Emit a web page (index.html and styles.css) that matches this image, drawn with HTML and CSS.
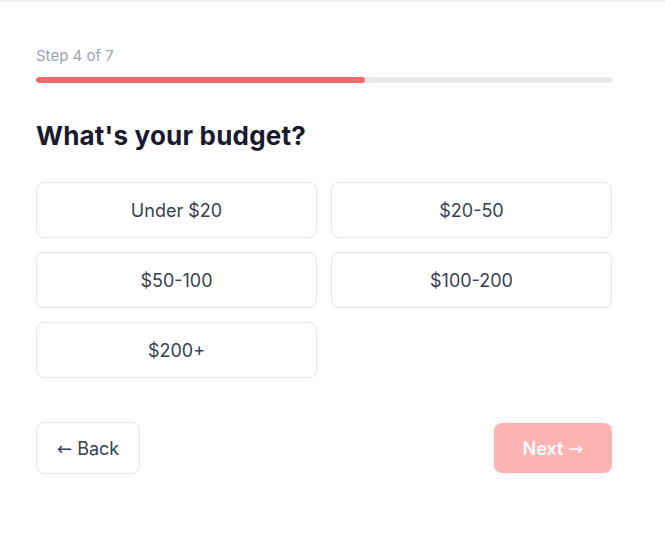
FILE: index.html
```html
<!DOCTYPE html>
<html>
<head>
<meta charset="utf-8">
<link rel="stylesheet" href="styles.css">
</head>
<body>
<div class="page">
  <div class="wizard">
    <div class="step">Step 4 of 7</div>
    <div class="track"><div class="fill" style="width:57.14%"></div></div>
    <h1 class="title">What's your budget?</h1>
    <div class="options">
      <button class="option">Under $20</button>
      <button class="option">$20-50</button>
      <button class="option">$50-100</button>
      <button class="option">$100-200</button>
      <button class="option">$200+</button>
    </div>
    <div class="nav">
      <button class="back"><span class="arrow">←</span> Back</button>
      <button class="next">Next <span class="arrow">→</span></button>
    </div>
  </div>
</div>
</body>
</html>
```

FILE: styles.css
```css
html, body {
  margin: 0;
  padding: 0;
  background: #ffffff;
}
body {
  font-family: Inter, "Noto Sans", "Liberation Sans", sans-serif;
  border-top: 2px solid #f4f4f4;
}
.page {
  padding: 44px 36px 0 36px;
}
.wizard {
  width: 576px;
}
.step {
  font-size: 15px;
  line-height: 20px;
  color: #9ca3af;
}
.track {
  margin-top: 11px;
  height: 6px;
  border-radius: 3px;
  background: #e9e9e9;
  overflow: hidden;
}
.fill {
  height: 100%;
  background: #ef6b6b;
  border-radius: 3px;
}
.title {
  margin: 36px 0 0 0;
  font-size: 26px;
  line-height: 34px;
  font-weight: 700;
  letter-spacing: 0.2px;
  color: #1a1a2e;
}
.options {
  margin-top: 29px;
  display: grid;
  grid-template-columns: 1fr 1fr;
  gap: 14px 14px;
}
.option {
  height: 56px;
  border: 1px solid #e5e7eb;
  border-radius: 8px;
  background: #fff;
  font-family: inherit;
  font-size: 18px;
  color: #374151;
  padding: 0;
}
.nav {
  margin-top: 44px;
  display: flex;
  justify-content: space-between;
  align-items: center;
}
.arrow {
  font-family: "DejaVu Sans", sans-serif;
  font-weight: 400;
}
.back {
  height: 52px;
  padding: 0 20px;
  border: 1px solid #e5e7eb;
  border-radius: 8px;
  background: #fff;
  font-family: inherit;
  font-size: 18px;
  color: #374151;
}
.next {
  height: 50px;
  padding: 0 29px;
  border: none;
  border-radius: 8px;
  background: #fcb3b3;
  font-family: inherit;
  font-size: 18px;
  font-weight: 600;
  color: #ffffff;
}
```
